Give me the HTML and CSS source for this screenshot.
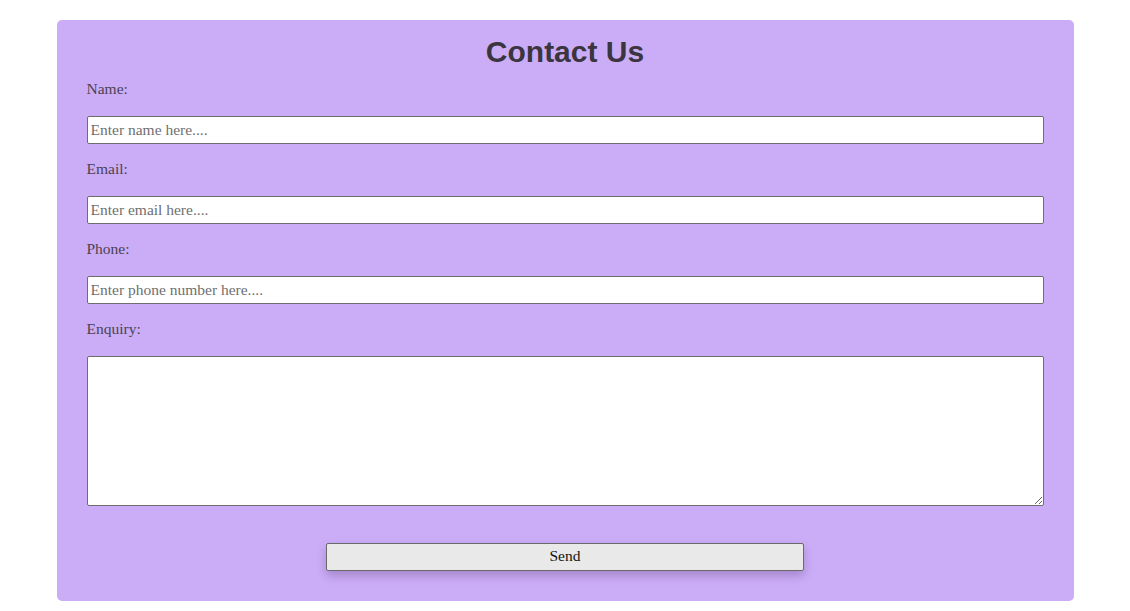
FILE: index.html
```html
<!DOCTYPE html>
<html lang="en">
<head>
<meta charset="utf-8">
<title>Contact Us</title>
<link rel="stylesheet" href="styles.css">
</head>
<body>
<form class="card">
  <h1 class="title">Contact Us</h1>
  <label class="label" for="name">Name:</label>
  <input class="field" id="name" type="text" placeholder="Enter name here....">
  <label class="label" for="email">Email:</label>
  <input class="field" id="email" type="email" placeholder="Enter email here....">
  <label class="label" for="phone">Phone:</label>
  <input class="field" id="phone" type="tel" placeholder="Enter phone number here....">
  <label class="label" for="enquiry">Enquiry:</label>
  <textarea class="area" id="enquiry"></textarea>
  <button class="send" type="button">Send</button>
</form>
</body>
</html>
```
FILE: styles.css
```css
html, body {
  margin: 0;
  padding: 0;
  background: #ffffff;
}
body {
  padding-top: 20px;
  font-family: "Liberation Serif", serif;
}
.card {
  width: 90%;
  margin: 0 auto;
  box-sizing: border-box;
  background: #cbadf7;
  border-radius: 5px;
  padding: 14px 30px 30px;
  display: flex;
  flex-direction: column;
}
.title {
  margin: 0 0 10px;
  font-family: "Liberation Sans", Arial, sans-serif;
  font-weight: bold;
  font-size: 30px;
  line-height: 36px;
  text-align: center;
  color: #3b3540;
}
.label {
  display: block;
  font-size: 15.5px;
  line-height: 18px;
  color: #4a4252;
  margin-bottom: 18px;
}
.field {
  display: block;
  box-sizing: border-box;
  width: 100%;
  height: 28px;
  margin: 0 0 16px;
  padding: 0 3px;
  border: 1px solid #6e6e6e;
  border-radius: 2px;
  background: #ffffff;
  font-family: "Liberation Serif", serif;
  font-size: 15.5px;
  color: #333;
}
.field::placeholder {
  color: #6f6f6f;
}
.area {
  display: block;
  box-sizing: border-box;
  width: 100%;
  height: 150px;
  margin: 0 0 37px;
  border: 1px solid #6e6e6e;
  border-radius: 2px;
  background: #ffffff;
  font-family: "Liberation Serif", serif;
  font-size: 15px;
  resize: both;
}
.send {
  align-self: center;
  width: 50%;
  height: 28px;
  box-sizing: border-box;
  border: 1px solid #6a6a6a;
  border-radius: 2px;
  background: #e9e9e9;
  font-family: "Liberation Serif", serif;
  font-size: 15.5px;
  line-height: 24px;
  padding: 0 6px 2px;
  color: #111;
  box-shadow: 0 5px 10px rgba(80, 50, 110, 0.3);
  cursor: pointer;
}
```
